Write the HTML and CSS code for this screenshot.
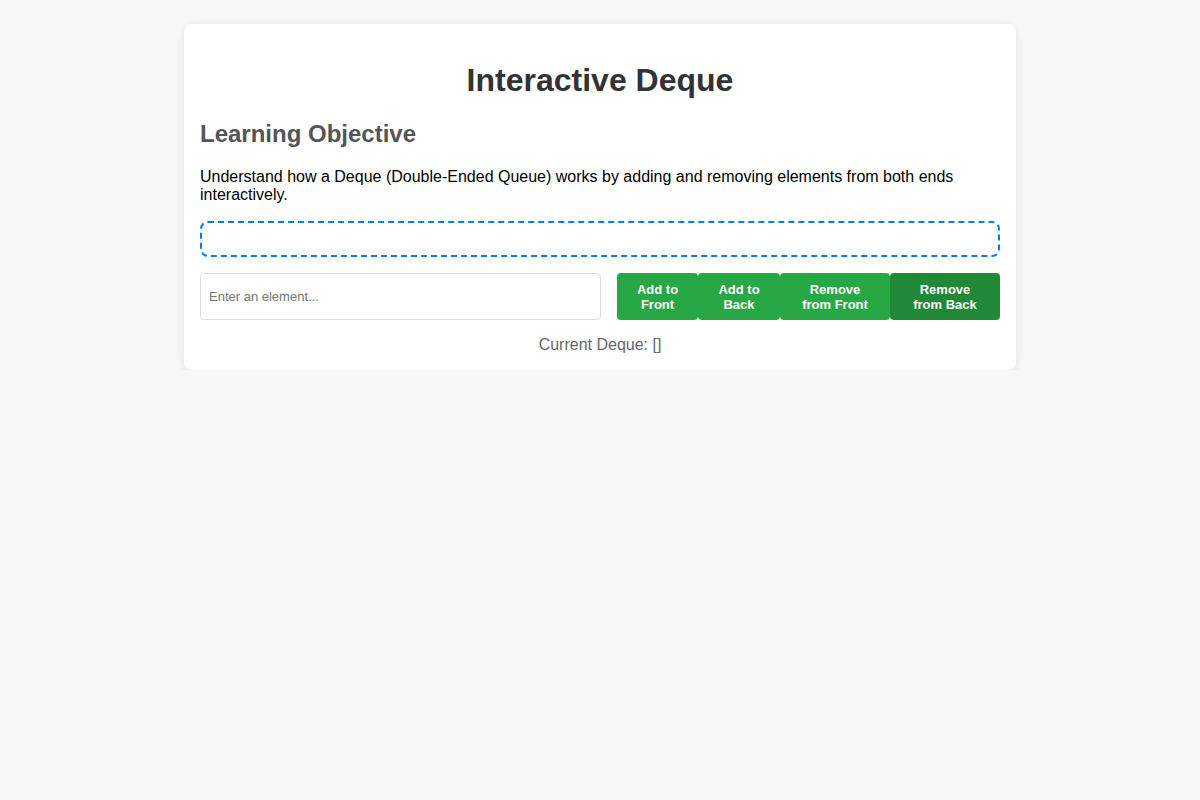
FILE: index.html
```html
<!DOCTYPE html>
<html lang="en">
<head>
<meta charset="UTF-8">
<title>Interactive Deque</title>
<link rel="stylesheet" href="styles.css">
</head>
<body>
<div class="card">
  <h1 class="title">Interactive Deque</h1>
  <h2 class="subtitle">Learning Objective</h2>
  <p class="desc">Understand how a Deque (Double-Ended Queue) works by adding and removing elements from both ends interactively.</p>
  <div class="deque-box"></div>
  <div class="controls">
    <input class="element-input" type="text" placeholder="Enter an element...">
    <div class="buttons">
      <button class="btn btn-w1">Add to<br>Front</button>
      <button class="btn btn-w2">Add to<br>Back</button>
      <button class="btn btn-w3">Remove<br>from Front</button>
      <button class="btn btn-w3 btn-dark">Remove<br>from Back</button>
    </div>
  </div>
  <div class="status">Current Deque: []</div>
</div>
</body>
</html>
```
FILE: styles.css
```css
html, body {
  margin: 0;
  padding: 0;
}
body {
  background: #f8f8f8;
  font-family: "Liberation Sans", Arial, sans-serif;
  padding-top: 24px;
}
.card {
  width: 800px;
  margin: 0 auto;
  background: #fff;
  border-radius: 8px;
  padding: 16px;
  box-shadow: 0 2px 10px rgba(0, 0, 0, 0.1);
}
.title {
  font-size: 32px;
  text-align: center;
  color: #333;
  margin: 22px 0 21px;
}
.subtitle {
  font-size: 24px;
  color: #555;
  margin: 19px 0 20px;
}
.desc {
  font-size: 16px;
  color: #000;
  margin: 0 0 17px;
}
.deque-box {
  height: 36px;
  box-sizing: border-box;
  border: 2px dashed #007bff;
  border-radius: 8px;
  margin-bottom: 16px;
}
.controls {
  display: flex;
  gap: 16px;
}
.element-input {
  width: 401px;
  height: 47px;
  box-sizing: border-box;
  border: 1px solid #ddd;
  border-radius: 4px;
  padding: 8px;
  font-family: "Liberation Sans", Arial, sans-serif;
  font-size: 13px;
  outline: none;
}
.element-input::placeholder {
  color: #757575;
}
.buttons {
  display: flex;
}
.btn {
  height: 47px;
  box-sizing: border-box;
  border: none;
  border-radius: 4px;
  background: #28a745;
  color: #fff;
  font-family: "Liberation Sans", Arial, sans-serif;
  font-size: 13px;
  font-weight: bold;
  line-height: 15px;
  padding: 0 4px;
}
.btn-w1 { width: 81px; }
.btn-w2 { width: 82px; }
.btn-w3 { width: 110px; }
.btn-dark {
  background: #218838;
}
.status {
  text-align: center;
  color: #666;
  font-size: 16px;
  margin-top: 16px;
}
```
